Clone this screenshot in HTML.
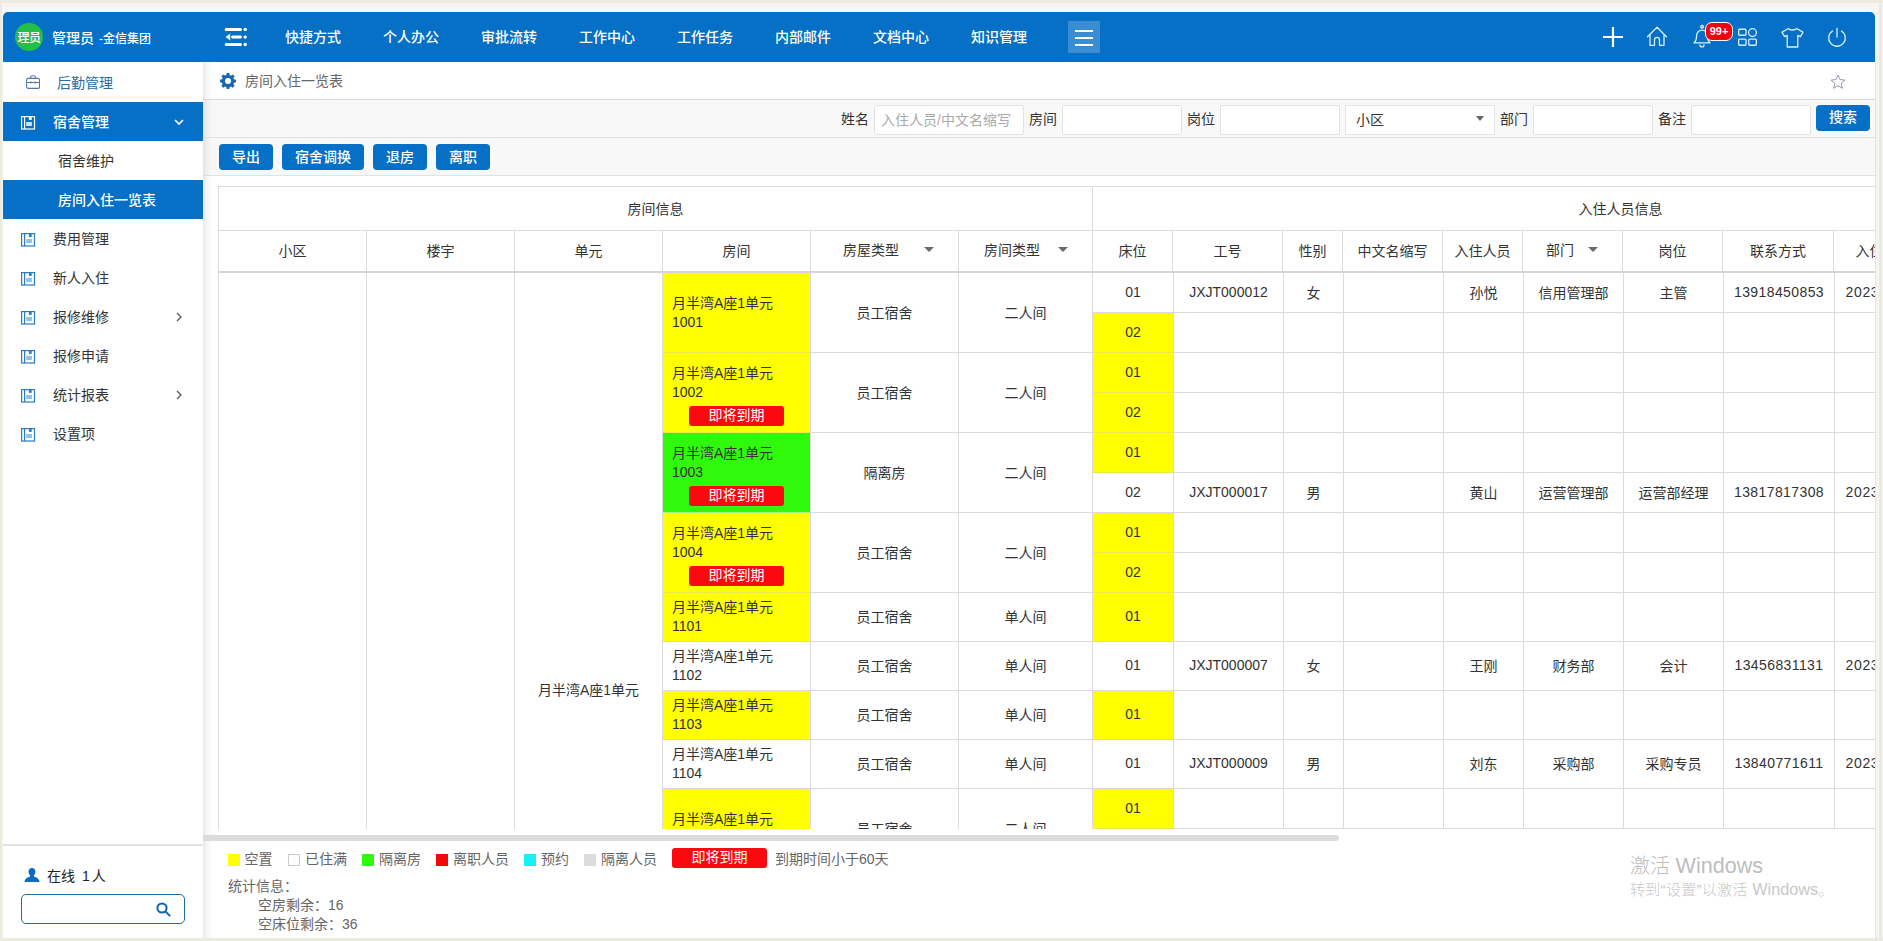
<!DOCTYPE html><html lang="zh-CN"><head><meta charset="utf-8"><title>房间入住一览表</title><style>
*{box-sizing:border-box;margin:0;padding:0}
html,body{width:1883px;height:941px;overflow:hidden;background:#ecebdf;font-family:"Liberation Sans","Noto Sans CJK SC",sans-serif;font-size:14px;color:#333}
.a{position:absolute}
#frame{left:2px;top:3px;width:1877px;height:935px;background:#f6f5f1}
#frame2{left:3px;top:9px;width:1876px;height:929px;background:linear-gradient(#f2f7fa,#f2f7fa 3px,#f4f4f1 3px)}
#app{left:3px;top:12px;width:1872px;height:926px;background:#fff;border-radius:5px 5px 0 0;overflow:hidden}
#hdr{left:0;top:0;width:1872px;height:50px;background:#0570c5;color:#fff}
.nav{top:0;height:50px;line-height:50px;font-size:14px;font-weight:500;white-space:nowrap;color:#fff}
#side{left:0;top:50px;width:200px;height:876px;background:#fff}
.mi{left:0;width:200px;height:39px;line-height:39px;font-size:14px;color:#333;white-space:nowrap}
.mi.on{background:#0570c5;color:#fff;font-weight:500}
.mi span{position:absolute;left:50px;top:1px}
.mi.sub span{left:55px}
.mi svg{position:absolute}
#main{left:200px;top:50px;width:1672px;height:876px;background:#fff}
.lbl{top:43px;height:29px;line-height:29px;font-size:14px;color:#333;white-space:nowrap}
.inp{top:43px;height:30px;background:#fff;border:1px solid #e2e2e2;border-radius:2px}
.btn{background:#0570c5;color:#fff;border-radius:4px;font-weight:500;text-align:center;font-size:14px;white-space:nowrap}
.tb{top:82px;height:26px;line-height:26px}
#tbl{left:15px;top:124px;width:1657px;height:643px;overflow:hidden;background:#fff}
.c{position:absolute;border-right:1px solid #dbdbdb;border-bottom:1px solid #dbdbdb;font-size:14px;color:#333;display:flex;align-items:center;justify-content:center;white-space:nowrap;overflow:hidden;padding-bottom:2px}
.y{background:#ffff00;border-bottom-color:#e9e94a}
.g{background:#2ffa0c;border-bottom-color:#a0f57a}
.rm{display:block;padding:0 0 0 9px;white-space:normal;line-height:19px;text-align:left}
.bdg{position:absolute;background:#fa0a0f;color:#fff;border-radius:3px;font-size:14px;text-align:center;white-space:nowrap}
.lg{top:785px;height:24px;line-height:24px;font-size:14px;color:#666;white-space:nowrap}
.sw{top:792px;width:11.5px;height:11.5px}
</style></head><body>
<div class="a" style="left:1879px;top:3px;width:3px;height:935px;background:#ebeae3"></div><div class="a" style="left:1882px;top:3px;width:1px;height:935px;background:#f6f5ee"></div><div class="a" id="frame"></div><div class="a" id="frame2"></div>
<div class="a" id="app">
<div class="a" id="hdr">
<div class="a" style="left:12px;top:11px;width:28px;height:28px;border-radius:50%;background:#23c048;color:#fff;font-size:12px;font-weight:500;line-height:30px;text-align:center;letter-spacing:-0.5px;overflow:hidden">理员</div>
<div class="a nav" style="left:49px;top:1px">管理员 <span style="font-size:12px;margin-left:1px">-金信集团</span></div>
<svg class="a" style="left:219px;top:15px" width="26" height="20" viewBox="0 0 26 20"><g fill="none" stroke="#fff" stroke-width="3" stroke-linecap="round"><path d="M4.2 2.400H18.500M10.600 10.100H18.500M4.200 17.500H18.500"/></g><g fill="#fff"><circle cx="23.2" cy="2.400" r="1.700"/><circle cx="23.200" cy="10.100" r="1.700"/><circle cx="23.200" cy="17.500" r="1.700"/><path d="M3.600 10.100l4.600-3.500v7z"/></g></svg>
<div class="a nav" style="left:282px">快捷方式</div>
<div class="a nav" style="left:380px">个人办公</div>
<div class="a nav" style="left:478px">审批流转</div>
<div class="a nav" style="left:576px">工作中心</div>
<div class="a nav" style="left:674px">工作任务</div>
<div class="a nav" style="left:772px">内部邮件</div>
<div class="a nav" style="left:870px">文档中心</div>
<div class="a nav" style="left:968px">知识管理</div>
<div class="a" style="left:1065px;top:9px;width:32px;height:32px;background:#3a8dd1"></div>
<div class="a" style="left:1072px;top:18px;width:18px;height:2px;background:#fff"></div>
<div class="a" style="left:1072px;top:25px;width:18px;height:2px;background:#fff"></div>
<div class="a" style="left:1072px;top:32px;width:18px;height:2px;background:#fff"></div>
<svg class="a" style="left:1595px;top:10px" width="260" height="30" viewBox="0 0 260 30" fill="none" stroke="#d9f0ff" stroke-width="1.3" stroke-linejoin="round" stroke-linecap="round"><path d="M5 15H25M15 5V25" stroke="#fff" stroke-width="2.2" stroke-linecap="butt"/><path transform="translate(0,-0.7)" d="M49.5 15.5L59 6L68.5 15.5M52 13.5V24H56.5V18.5a2.5 2.5 0 0 1 5 0V24H66V13.5"/><path transform="translate(0,-0.7)" d="M104 6.8a1.3 1.3 0 1 1 .1 0M96 21.5c2.2-1.6 2.6-4 2.6-7.2a5.4 5.4 0 0 1 10.8 0c0 3.2.4 5.6 2.6 7.2zM102 23.6a2 2 0 0 0 4 0"/><rect x="140.65" y="7.25" width="7.4" height="6" rx="1"/><rect x="140.65" y="17.05" width="7.4" height="6.2" rx="1"/><rect x="150.75" y="17.05" width="7.6" height="6.2" rx="1"/><circle cx="154.5" cy="10.6" r="3.9"/><path d="M190.5 6.5c1 2 7 2 8 0l6.5 3.6-2.6 4.6-2.6-1.3V25h-10.6V13.4l-2.6 1.3-2.6-4.6z"/><path d="M239 6.5V15M234.5 9a8.3 8.3 0 1 0 9 0"/></svg>
<div class="a" style="left:1702px;top:10px;width:28px;height:19px;background:#f2000c;border:1.5px solid #fff;border-radius:7px;color:#fff;font-size:11px;font-weight:700;line-height:16px;text-align:center">99+</div>
</div>
<div class="a" id="side">
<div class="a mi" style="top:0;height:40px;line-height:41px;color:#2d6a9f"><svg style="left:23px;top:13px" width="14" height="14" viewBox="0 0 14 14" fill="none" stroke="#5878a3" stroke-width="1.1"><rect x="0.6" y="3.4" width="12.9" height="10" rx="1.6"/><path d="M4.6 3.4V2.300a1.600 1.600 0 0 1 1.600-1.600h1.600a1.600 1.600 0 0 1 1.600 1.600V3.400M0.600 7.500H13.500M4.700 6.600v1.800M9.300 6.600v1.800"/></svg><span style="left:54px">后勤管理</span></div>
<div class="a mi on" style="top:40px"><svg style="left:18px;top:14px" width="15" height="14" viewBox="0 0 15 14" fill="none" stroke="#fff" stroke-width="1.2"><rect x="0.6" y="0.6" width="12.9" height="12.4"/><path d="M3.6 0.6V13"/><path d="M7.9 0.3h2.8v3.6h-2.8z" fill="#fff" stroke="none"/><path d="M5.2 5.9h5.7v4.2H5.2z" fill="#cfe6fa" stroke="none"/></svg><span>宿舍管理</span><svg style="left:171px;top:17px" width="10" height="7" viewBox="0 0 10 7" fill="none" stroke="#fff" stroke-width="1.6"><path d="M1 1l4 4 4-4"/></svg></div>
<div class="a mi sub" style="top:79px"><span>宿舍维护</span></div>
<div class="a mi sub on" style="top:118px"><span>房间入住一览表</span></div>
<div class="a mi " style="top:157px"><svg style="left:18px;top:14px" width="15" height="14" viewBox="0 0 15 14" fill="none" stroke="#2b7cc0" stroke-width="1.2"><rect x="0.6" y="0.6" width="12.9" height="12.4"/><path d="M3.6 0.6V13"/><path d="M7.9 0.3h2.8v3.6h-2.8z" fill="#2b7cc0" stroke="none"/><path d="M5.2 5.9h5.7v4.2H5.2z" fill="#8fc0e8" stroke="none"/></svg><span>费用管理</span></div>
<div class="a mi " style="top:196px"><svg style="left:18px;top:14px" width="15" height="14" viewBox="0 0 15 14" fill="none" stroke="#2b7cc0" stroke-width="1.2"><rect x="0.6" y="0.6" width="12.9" height="12.4"/><path d="M3.6 0.6V13"/><path d="M7.9 0.3h2.8v3.6h-2.8z" fill="#2b7cc0" stroke="none"/><path d="M5.2 5.9h5.7v4.2H5.2z" fill="#8fc0e8" stroke="none"/></svg><span>新人入住</span></div>
<div class="a mi " style="top:235px"><svg style="left:18px;top:14px" width="15" height="14" viewBox="0 0 15 14" fill="none" stroke="#2b7cc0" stroke-width="1.2"><rect x="0.6" y="0.6" width="12.9" height="12.4"/><path d="M3.6 0.6V13"/><path d="M7.9 0.3h2.8v3.6h-2.8z" fill="#2b7cc0" stroke="none"/><path d="M5.2 5.9h5.7v4.2H5.2z" fill="#8fc0e8" stroke="none"/></svg><span>报修维修</span><svg style="left:173px;top:15px" width="6" height="10" viewBox="0 0 6 10" fill="none" stroke="#555" stroke-width="1.3"><path d="M1 1l4 4-4 4"/></svg></div>
<div class="a mi " style="top:274px"><svg style="left:18px;top:14px" width="15" height="14" viewBox="0 0 15 14" fill="none" stroke="#2b7cc0" stroke-width="1.2"><rect x="0.6" y="0.6" width="12.9" height="12.4"/><path d="M3.6 0.6V13"/><path d="M7.9 0.3h2.8v3.6h-2.8z" fill="#2b7cc0" stroke="none"/><path d="M5.2 5.9h5.7v4.2H5.2z" fill="#8fc0e8" stroke="none"/></svg><span>报修申请</span></div>
<div class="a mi " style="top:313px"><svg style="left:18px;top:14px" width="15" height="14" viewBox="0 0 15 14" fill="none" stroke="#2b7cc0" stroke-width="1.2"><rect x="0.6" y="0.6" width="12.9" height="12.4"/><path d="M3.6 0.6V13"/><path d="M7.9 0.3h2.8v3.6h-2.8z" fill="#2b7cc0" stroke="none"/><path d="M5.2 5.9h5.7v4.2H5.2z" fill="#8fc0e8" stroke="none"/></svg><span>统计报表</span><svg style="left:173px;top:15px" width="6" height="10" viewBox="0 0 6 10" fill="none" stroke="#555" stroke-width="1.3"><path d="M1 1l4 4-4 4"/></svg></div>
<div class="a mi " style="top:352px"><svg style="left:18px;top:14px" width="15" height="14" viewBox="0 0 15 14" fill="none" stroke="#2b7cc0" stroke-width="1.2"><rect x="0.6" y="0.6" width="12.9" height="12.4"/><path d="M3.6 0.6V13"/><path d="M7.9 0.3h2.8v3.6h-2.8z" fill="#2b7cc0" stroke="none"/><path d="M5.2 5.9h5.7v4.2H5.2z" fill="#8fc0e8" stroke="none"/></svg><span>设置项</span></div>
<div class="a" style="left:0;top:782px;width:200px;height:2px;background:#e2e2e2"></div>
<svg class="a" style="left:21px;top:806px" width="16" height="14" viewBox="0 0 16 14"><path d="M8 0c2.2 0 3.4 1.6 3.4 3.8 0 1.5-.6 2.9-1.5 3.7v1c2 .7 5.4 1.9 5.6 5.5H.5c.2-3.6 3.6-4.8 5.600-5.5v-1C5.200 6.700 4.600 5.300 4.600 3.800 4.600 1.600 5.800 0 8 0z" fill="#0a6cc0"/></svg>
<div class="a" style="left:44px;top:803px;height:22px;line-height:22px;font-size:14px;color:#222;white-space:nowrap">在线<span style="margin:0 2px 0 7px">1</span>人</div>
<div class="a" style="left:18px;top:832px;width:164px;height:30px;border:1px solid #1b6f9c;border-radius:5px;background:#fff"></div>
<svg class="a" style="left:153px;top:840px" width="15" height="15" viewBox="0 0 15 15" fill="none" stroke="#0b63b4" stroke-width="2"><circle cx="6" cy="6" r="4.6"/><path d="M9.4 9.4L13.6 13.6" stroke-linecap="round"/></svg>
</div>
<div class="a" id="main">
<svg class="a" style="left:17px;top:11px" width="16" height="16" viewBox="0 0 16 16"><path fill="#1767b3" d="M6.7 0h2.600l.4 2.100 1.300.55L12.800 1.450l1.800 1.800-1.200 1.800.55 1.300 2.100.4v2.600l-2.100.4-.55 1.300 1.200 1.800-1.800 1.800-1.800-1.200-1.300.55-.4 2.100H6.700l-.4-2.100-1.300-.55-1.800 1.200-1.800-1.800 1.200-1.800-.55-1.300L0 9.300V6.700l2.100-.4.55-1.300-1.200-1.800 1.800-1.800 1.800 1.200 1.300-.55zM8 5a3 3 0 1 0 0 6 3 3 0 0 0 0-6z"/></svg>
<div class="a" style="left:42px;top:8px;height:22px;line-height:22px;font-size:14px;color:#666;white-space:nowrap">房间入住一览表</div>
<svg class="a" style="left:1627px;top:12px" width="16" height="15" viewBox="0 0 16 15" fill="none" stroke="#9197a8" stroke-width="1"><path d="M8 1l2 4.600 5 .5-3.800 3.300 1.200 4.900L8 11.700 3.600 14.300l1.200-4.900L1 6.100l5-.5z"/></svg>
<div class="a" style="left:0;top:37px;width:1672px;height:1px;background:#dcdcdc"></div>
<div class="a" style="left:0;top:38px;width:1672px;height:75px;background:#f8f8f8"></div>
<div class="a" style="left:0;top:75px;width:1672px;height:1px;background:#e2e2e2"></div>
<div class="a" style="left:0;top:113px;width:1672px;height:1px;background:#e2e2e2"></div>
<div class="a lbl" style="left:638px">姓名</div>
<div class="a inp" style="left:671px;width:150px"><span style="position:absolute;left:6px;top:0;line-height:29px;color:#aaa;white-space:nowrap">入住人员/中文名缩写</span></div>
<div class="a lbl" style="left:826px">房间</div>
<div class="a inp" style="left:859px;width:120px"></div>
<div class="a lbl" style="left:984px">岗位</div>
<div class="a inp" style="left:1017px;width:120px"></div>
<div class="a inp" style="left:1142px;width:150px"><span style="position:absolute;left:10px;top:0;line-height:28px;color:#333">小区</span><span style="position:absolute;left:130px;top:10px;border:4.5px solid transparent;border-top:5px solid #666;border-bottom:0;width:0;height:0"></span></div>
<div class="a lbl" style="left:1297px">部门</div>
<div class="a inp" style="left:1330px;width:120px"></div>
<div class="a lbl" style="left:1455px">备注</div>
<div class="a inp" style="left:1488px;width:120px"></div>
<div class="a btn" style="left:1613px;top:43px;width:54px;height:26px;line-height:25px">搜索</div>
<div class="a" style="left:0;top:0;width:10px;height:876px;background:linear-gradient(90deg,rgba(190,190,205,.36),rgba(190,190,205,.14) 40%,rgba(190,190,205,0))"></div>
<div class="a btn tb" style="left:16px;width:54px">导出</div>
<div class="a btn tb" style="left:79px;width:82px">宿舍调换</div>
<div class="a btn tb" style="left:170px;width:54px">退房</div>
<div class="a btn tb" style="left:233px;width:54px">离职</div>
<div class="a" id="tbl">
<div class="a" style="left:0;top:0;width:1px;height:700px;background:#dbdbdb"></div>
<div class="a" style="left:0;top:0;width:1700px;height:1px;background:#dbdbdb"></div>
<div class="c " style="left:1px;top:1px;width:874px;height:44px;">房间信息</div>
<div class="c " style="left:875px;top:1px;width:1056px;height:44px;">入住人员信息</div>
<div class="c " style="left:1px;top:45px;width:148px;height:42px;border-bottom:2px solid #d6d6d6;padding-bottom:3px">小区</div>
<div class="c " style="left:149px;top:45px;width:148px;height:42px;border-bottom:2px solid #d6d6d6;padding-bottom:3px">楼宇</div>
<div class="c " style="left:297px;top:45px;width:148px;height:42px;border-bottom:2px solid #d6d6d6;padding-bottom:3px">单元</div>
<div class="c " style="left:445px;top:45px;width:148px;height:42px;border-bottom:2px solid #d6d6d6;padding-bottom:3px">房间</div>
<div class="c " style="left:593px;top:45px;width:148px;height:42px;border-bottom:2px solid #d6d6d6;padding-bottom:3px"></div>
<div class="c " style="left:741px;top:45px;width:134px;height:42px;border-bottom:2px solid #d6d6d6;padding-bottom:3px"></div>
<div class="c " style="left:875px;top:45px;width:80px;height:42px;border-bottom:2px solid #d6d6d6;padding-bottom:3px">床位</div>
<div class="c " style="left:955px;top:45px;width:110px;height:42px;border-bottom:2px solid #d6d6d6;padding-bottom:3px">工号</div>
<div class="c " style="left:1065px;top:45px;width:60px;height:42px;border-bottom:2px solid #d6d6d6;padding-bottom:3px">性别</div>
<div class="c " style="left:1125px;top:45px;width:100px;height:42px;border-bottom:2px solid #d6d6d6;padding-bottom:3px">中文名缩写</div>
<div class="c " style="left:1225px;top:45px;width:80px;height:42px;border-bottom:2px solid #d6d6d6;padding-bottom:3px">入住人员</div>
<div class="c " style="left:1305px;top:45px;width:100px;height:42px;border-bottom:2px solid #d6d6d6;padding-bottom:3px"></div>
<div class="c " style="left:1405px;top:45px;width:100px;height:42px;border-bottom:2px solid #d6d6d6;padding-bottom:3px">岗位</div>
<div class="c " style="left:1505px;top:45px;width:111px;height:42px;border-bottom:2px solid #d6d6d6;padding-bottom:3px">联系方式</div>
<div class="c " style="left:1616px;top:45px;width:100px;height:42px;border-bottom:2px solid #d6d6d6;padding-bottom:3px">入住日期</div>
<div class="a" style="left:625px;top:53px;line-height:22px;font-size:14px;white-space:nowrap">房屋类型</div>
<div class="a" style="left:706px;top:61px;border:5px solid transparent;border-top:5px solid #6a6a6a;border-bottom:0;width:0;height:0"></div>
<div class="a" style="left:766px;top:53px;line-height:22px;font-size:14px;white-space:nowrap">房间类型</div>
<div class="a" style="left:840px;top:61px;border:5px solid transparent;border-top:5px solid #6a6a6a;border-bottom:0;width:0;height:0"></div>
<div class="a" style="left:1328px;top:53px;line-height:22px;font-size:14px;white-space:nowrap">部门</div>
<div class="a" style="left:1370px;top:61px;border:5px solid transparent;border-top:5px solid #6a6a6a;border-bottom:0;width:0;height:0"></div>
<div class="c " style="left:1px;top:87px;width:148px;height:838px;"></div>
<div class="c " style="left:149px;top:87px;width:148px;height:838px;"></div>
<div class="c " style="left:297px;top:87px;width:148px;height:835px;">月半湾A座1单元</div>
<div class="c y" style="left:445px;top:87px;width:148px;height:80px;justify-content:flex-start"><div class="rm" style="width:147px;margin-top:2px">月半湾A座1单元<br>1001</div></div>
<div class="c " style="left:593px;top:87px;width:148px;height:80px;">员工宿舍</div>
<div class="c " style="left:741px;top:87px;width:134px;height:80px;">二人间</div>
<div class="c " style="left:875px;top:87px;width:81px;height:40px;">01</div>
<div class="c " style="left:956px;top:87px;width:110px;height:40px;">JXJT000012</div>
<div class="c " style="left:1066px;top:87px;width:60px;height:40px;">女</div>
<div class="c " style="left:1126px;top:87px;width:100px;height:40px;"></div>
<div class="c " style="left:1226px;top:87px;width:80px;height:40px;">孙悦</div>
<div class="c " style="left:1306px;top:87px;width:100px;height:40px;">信用管理部</div>
<div class="c " style="left:1406px;top:87px;width:100px;height:40px;">主管</div>
<div class="c " style="left:1506px;top:87px;width:111px;height:40px;letter-spacing:.4px">13918450853</div>
<div class="c " style="left:1617px;top:87px;width:100px;height:40px;letter-spacing:.62px">2023-03-01</div>
<div class="c y" style="left:875px;top:127px;width:81px;height:40px;">02</div>
<div class="c " style="left:956px;top:127px;width:110px;height:40px;"></div>
<div class="c " style="left:1066px;top:127px;width:60px;height:40px;"></div>
<div class="c " style="left:1126px;top:127px;width:100px;height:40px;"></div>
<div class="c " style="left:1226px;top:127px;width:80px;height:40px;"></div>
<div class="c " style="left:1306px;top:127px;width:100px;height:40px;"></div>
<div class="c " style="left:1406px;top:127px;width:100px;height:40px;"></div>
<div class="c " style="left:1506px;top:127px;width:111px;height:40px;"></div>
<div class="c " style="left:1617px;top:127px;width:100px;height:40px;"></div>
<div class="c y" style="left:445px;top:167px;width:148px;height:80px;display:block"><div class="rm" style="position:absolute;left:0;top:11px;width:147px">月半湾A座1单元<br>1002</div><div class="bdg" style="left:26px;top:53px;width:95px;height:20px;line-height:19px">即将到期</div></div>
<div class="c " style="left:593px;top:167px;width:148px;height:80px;">员工宿舍</div>
<div class="c " style="left:741px;top:167px;width:134px;height:80px;">二人间</div>
<div class="c y" style="left:875px;top:167px;width:81px;height:40px;">01</div>
<div class="c " style="left:956px;top:167px;width:110px;height:40px;"></div>
<div class="c " style="left:1066px;top:167px;width:60px;height:40px;"></div>
<div class="c " style="left:1126px;top:167px;width:100px;height:40px;"></div>
<div class="c " style="left:1226px;top:167px;width:80px;height:40px;"></div>
<div class="c " style="left:1306px;top:167px;width:100px;height:40px;"></div>
<div class="c " style="left:1406px;top:167px;width:100px;height:40px;"></div>
<div class="c " style="left:1506px;top:167px;width:111px;height:40px;"></div>
<div class="c " style="left:1617px;top:167px;width:100px;height:40px;"></div>
<div class="c y" style="left:875px;top:207px;width:81px;height:40px;">02</div>
<div class="c " style="left:956px;top:207px;width:110px;height:40px;"></div>
<div class="c " style="left:1066px;top:207px;width:60px;height:40px;"></div>
<div class="c " style="left:1126px;top:207px;width:100px;height:40px;"></div>
<div class="c " style="left:1226px;top:207px;width:80px;height:40px;"></div>
<div class="c " style="left:1306px;top:207px;width:100px;height:40px;"></div>
<div class="c " style="left:1406px;top:207px;width:100px;height:40px;"></div>
<div class="c " style="left:1506px;top:207px;width:111px;height:40px;"></div>
<div class="c " style="left:1617px;top:207px;width:100px;height:40px;"></div>
<div class="c g" style="left:445px;top:247px;width:148px;height:80px;display:block"><div class="rm" style="position:absolute;left:0;top:11px;width:147px">月半湾A座1单元<br>1003</div><div class="bdg" style="left:26px;top:53px;width:95px;height:20px;line-height:19px">即将到期</div></div>
<div class="c " style="left:593px;top:247px;width:148px;height:80px;">隔离房</div>
<div class="c " style="left:741px;top:247px;width:134px;height:80px;">二人间</div>
<div class="c y" style="left:875px;top:247px;width:81px;height:40px;">01</div>
<div class="c " style="left:956px;top:247px;width:110px;height:40px;"></div>
<div class="c " style="left:1066px;top:247px;width:60px;height:40px;"></div>
<div class="c " style="left:1126px;top:247px;width:100px;height:40px;"></div>
<div class="c " style="left:1226px;top:247px;width:80px;height:40px;"></div>
<div class="c " style="left:1306px;top:247px;width:100px;height:40px;"></div>
<div class="c " style="left:1406px;top:247px;width:100px;height:40px;"></div>
<div class="c " style="left:1506px;top:247px;width:111px;height:40px;"></div>
<div class="c " style="left:1617px;top:247px;width:100px;height:40px;"></div>
<div class="c " style="left:875px;top:287px;width:81px;height:40px;">02</div>
<div class="c " style="left:956px;top:287px;width:110px;height:40px;">JXJT000017</div>
<div class="c " style="left:1066px;top:287px;width:60px;height:40px;">男</div>
<div class="c " style="left:1126px;top:287px;width:100px;height:40px;"></div>
<div class="c " style="left:1226px;top:287px;width:80px;height:40px;">黄山</div>
<div class="c " style="left:1306px;top:287px;width:100px;height:40px;">运营管理部</div>
<div class="c " style="left:1406px;top:287px;width:100px;height:40px;">运营部经理</div>
<div class="c " style="left:1506px;top:287px;width:111px;height:40px;letter-spacing:.4px">13817817308</div>
<div class="c " style="left:1617px;top:287px;width:100px;height:40px;letter-spacing:.62px">2023-03-01</div>
<div class="c y" style="left:445px;top:327px;width:148px;height:80px;display:block"><div class="rm" style="position:absolute;left:0;top:11px;width:147px">月半湾A座1单元<br>1004</div><div class="bdg" style="left:26px;top:53px;width:95px;height:20px;line-height:19px">即将到期</div></div>
<div class="c " style="left:593px;top:327px;width:148px;height:80px;">员工宿舍</div>
<div class="c " style="left:741px;top:327px;width:134px;height:80px;">二人间</div>
<div class="c y" style="left:875px;top:327px;width:81px;height:40px;">01</div>
<div class="c " style="left:956px;top:327px;width:110px;height:40px;"></div>
<div class="c " style="left:1066px;top:327px;width:60px;height:40px;"></div>
<div class="c " style="left:1126px;top:327px;width:100px;height:40px;"></div>
<div class="c " style="left:1226px;top:327px;width:80px;height:40px;"></div>
<div class="c " style="left:1306px;top:327px;width:100px;height:40px;"></div>
<div class="c " style="left:1406px;top:327px;width:100px;height:40px;"></div>
<div class="c " style="left:1506px;top:327px;width:111px;height:40px;"></div>
<div class="c " style="left:1617px;top:327px;width:100px;height:40px;"></div>
<div class="c y" style="left:875px;top:367px;width:81px;height:40px;">02</div>
<div class="c " style="left:956px;top:367px;width:110px;height:40px;"></div>
<div class="c " style="left:1066px;top:367px;width:60px;height:40px;"></div>
<div class="c " style="left:1126px;top:367px;width:100px;height:40px;"></div>
<div class="c " style="left:1226px;top:367px;width:80px;height:40px;"></div>
<div class="c " style="left:1306px;top:367px;width:100px;height:40px;"></div>
<div class="c " style="left:1406px;top:367px;width:100px;height:40px;"></div>
<div class="c " style="left:1506px;top:367px;width:111px;height:40px;"></div>
<div class="c " style="left:1617px;top:367px;width:100px;height:40px;"></div>
<div class="c y" style="left:445px;top:407px;width:148px;height:49px;justify-content:flex-start"><div class="rm" style="width:147px;margin-top:2px">月半湾A座1单元<br>1101</div></div>
<div class="c " style="left:593px;top:407px;width:148px;height:49px;">员工宿舍</div>
<div class="c " style="left:741px;top:407px;width:134px;height:49px;">单人间</div>
<div class="c y" style="left:875px;top:407px;width:81px;height:49px;">01</div>
<div class="c " style="left:956px;top:407px;width:110px;height:49px;"></div>
<div class="c " style="left:1066px;top:407px;width:60px;height:49px;"></div>
<div class="c " style="left:1126px;top:407px;width:100px;height:49px;"></div>
<div class="c " style="left:1226px;top:407px;width:80px;height:49px;"></div>
<div class="c " style="left:1306px;top:407px;width:100px;height:49px;"></div>
<div class="c " style="left:1406px;top:407px;width:100px;height:49px;"></div>
<div class="c " style="left:1506px;top:407px;width:111px;height:49px;"></div>
<div class="c " style="left:1617px;top:407px;width:100px;height:49px;"></div>
<div class="c " style="left:445px;top:456px;width:148px;height:49px;justify-content:flex-start"><div class="rm" style="width:147px;margin-top:2px">月半湾A座1单元<br>1102</div></div>
<div class="c " style="left:593px;top:456px;width:148px;height:49px;">员工宿舍</div>
<div class="c " style="left:741px;top:456px;width:134px;height:49px;">单人间</div>
<div class="c " style="left:875px;top:456px;width:81px;height:49px;">01</div>
<div class="c " style="left:956px;top:456px;width:110px;height:49px;">JXJT000007</div>
<div class="c " style="left:1066px;top:456px;width:60px;height:49px;">女</div>
<div class="c " style="left:1126px;top:456px;width:100px;height:49px;"></div>
<div class="c " style="left:1226px;top:456px;width:80px;height:49px;">王刚</div>
<div class="c " style="left:1306px;top:456px;width:100px;height:49px;">财务部</div>
<div class="c " style="left:1406px;top:456px;width:100px;height:49px;">会计</div>
<div class="c " style="left:1506px;top:456px;width:111px;height:49px;letter-spacing:.4px">13456831131</div>
<div class="c " style="left:1617px;top:456px;width:100px;height:49px;letter-spacing:.62px">2023-03-01</div>
<div class="c y" style="left:445px;top:505px;width:148px;height:49px;justify-content:flex-start"><div class="rm" style="width:147px;margin-top:2px">月半湾A座1单元<br>1103</div></div>
<div class="c " style="left:593px;top:505px;width:148px;height:49px;">员工宿舍</div>
<div class="c " style="left:741px;top:505px;width:134px;height:49px;">单人间</div>
<div class="c y" style="left:875px;top:505px;width:81px;height:49px;">01</div>
<div class="c " style="left:956px;top:505px;width:110px;height:49px;"></div>
<div class="c " style="left:1066px;top:505px;width:60px;height:49px;"></div>
<div class="c " style="left:1126px;top:505px;width:100px;height:49px;"></div>
<div class="c " style="left:1226px;top:505px;width:80px;height:49px;"></div>
<div class="c " style="left:1306px;top:505px;width:100px;height:49px;"></div>
<div class="c " style="left:1406px;top:505px;width:100px;height:49px;"></div>
<div class="c " style="left:1506px;top:505px;width:111px;height:49px;"></div>
<div class="c " style="left:1617px;top:505px;width:100px;height:49px;"></div>
<div class="c " style="left:445px;top:554px;width:148px;height:49px;justify-content:flex-start"><div class="rm" style="width:147px;margin-top:2px">月半湾A座1单元<br>1104</div></div>
<div class="c " style="left:593px;top:554px;width:148px;height:49px;">员工宿舍</div>
<div class="c " style="left:741px;top:554px;width:134px;height:49px;">单人间</div>
<div class="c " style="left:875px;top:554px;width:81px;height:49px;">01</div>
<div class="c " style="left:956px;top:554px;width:110px;height:49px;">JXJT000009</div>
<div class="c " style="left:1066px;top:554px;width:60px;height:49px;">男</div>
<div class="c " style="left:1126px;top:554px;width:100px;height:49px;"></div>
<div class="c " style="left:1226px;top:554px;width:80px;height:49px;">刘东</div>
<div class="c " style="left:1306px;top:554px;width:100px;height:49px;">采购部</div>
<div class="c " style="left:1406px;top:554px;width:100px;height:49px;">采购专员</div>
<div class="c " style="left:1506px;top:554px;width:111px;height:49px;letter-spacing:.4px">13840771611</div>
<div class="c " style="left:1617px;top:554px;width:100px;height:49px;letter-spacing:.62px">2023-03-01</div>
<div class="c y" style="left:445px;top:603px;width:148px;height:80px;justify-content:flex-start"><div class="rm" style="width:147px;margin-top:2px">月半湾A座1单元<br>1105</div></div>
<div class="c " style="left:593px;top:603px;width:148px;height:80px;">员工宿舍</div>
<div class="c " style="left:741px;top:603px;width:134px;height:80px;">二人间</div>
<div class="c y" style="left:875px;top:603px;width:81px;height:40px;">01</div>
<div class="c " style="left:956px;top:603px;width:110px;height:40px;"></div>
<div class="c " style="left:1066px;top:603px;width:60px;height:40px;"></div>
<div class="c " style="left:1126px;top:603px;width:100px;height:40px;"></div>
<div class="c " style="left:1226px;top:603px;width:80px;height:40px;"></div>
<div class="c " style="left:1306px;top:603px;width:100px;height:40px;"></div>
<div class="c " style="left:1406px;top:603px;width:100px;height:40px;"></div>
<div class="c " style="left:1506px;top:603px;width:111px;height:40px;"></div>
<div class="c " style="left:1617px;top:603px;width:100px;height:40px;"></div>
<div class="c y" style="left:875px;top:643px;width:81px;height:40px;">02</div>
<div class="c " style="left:956px;top:643px;width:110px;height:40px;"></div>
<div class="c " style="left:1066px;top:643px;width:60px;height:40px;"></div>
<div class="c " style="left:1126px;top:643px;width:100px;height:40px;"></div>
<div class="c " style="left:1226px;top:643px;width:80px;height:40px;"></div>
<div class="c " style="left:1306px;top:643px;width:100px;height:40px;"></div>
<div class="c " style="left:1406px;top:643px;width:100px;height:40px;"></div>
<div class="c " style="left:1506px;top:643px;width:111px;height:40px;"></div>
<div class="c " style="left:1617px;top:643px;width:100px;height:40px;"></div>
</div>
<div class="a" style="left:0;top:773px;width:1136px;height:6px;background:#dcdcdc;border-radius:0 3px 3px 0"></div>
<div class="a sw" style="left:25px;background:#ffff00;"></div>
<div class="a lg" style="left:41.5px">空置</div>
<div class="a sw" style="left:85px;background:#fff;border:1px solid #ccc"></div>
<div class="a lg" style="left:102px">已住满</div>
<div class="a sw" style="left:159px;background:#2ffa0c;"></div>
<div class="a lg" style="left:176px">隔离房</div>
<div class="a sw" style="left:233px;background:#f00a0a;"></div>
<div class="a lg" style="left:250px">离职人员</div>
<div class="a sw" style="left:321px;background:#19f0f5;"></div>
<div class="a lg" style="left:338px">预约</div>
<div class="a sw" style="left:381px;background:#dcdcdc;"></div>
<div class="a lg" style="left:398px">隔离人员</div>
<div class="bdg" style="left:469px;top:786px;width:95px;height:20px;line-height:19px">即将到期</div>
<div class="a lg" style="left:572px">到期时间小于60天</div>
<div class="a" style="left:25px;top:815px;line-height:19px;font-size:14px;color:#666;white-space:nowrap">统计信息：<br><span style="padding-left:30px">空房剩余：16</span><br><span style="padding-left:30px">空床位剩余：36</span></div>
<div class="a" style="left:1427px;top:790px;font-size:20px;line-height:28px;color:#bdbdbd;font-weight:300;white-space:nowrap">激活 <span style="font-size:21.6px">Windows</span></div>
<div class="a" style="left:1427px;top:816px;font-size:15px;line-height:22px;color:#c8c8c8;font-weight:300;letter-spacing:.3px;white-space:nowrap">转到“设置”以激活 <span style="font-size:16.3px;letter-spacing:0">Windows</span>。</div>
</div>
</div>
<div class="a" style="left:1875px;top:62px;width:1px;height:876px;background:#e4e4e4"></div>
</body></html>
